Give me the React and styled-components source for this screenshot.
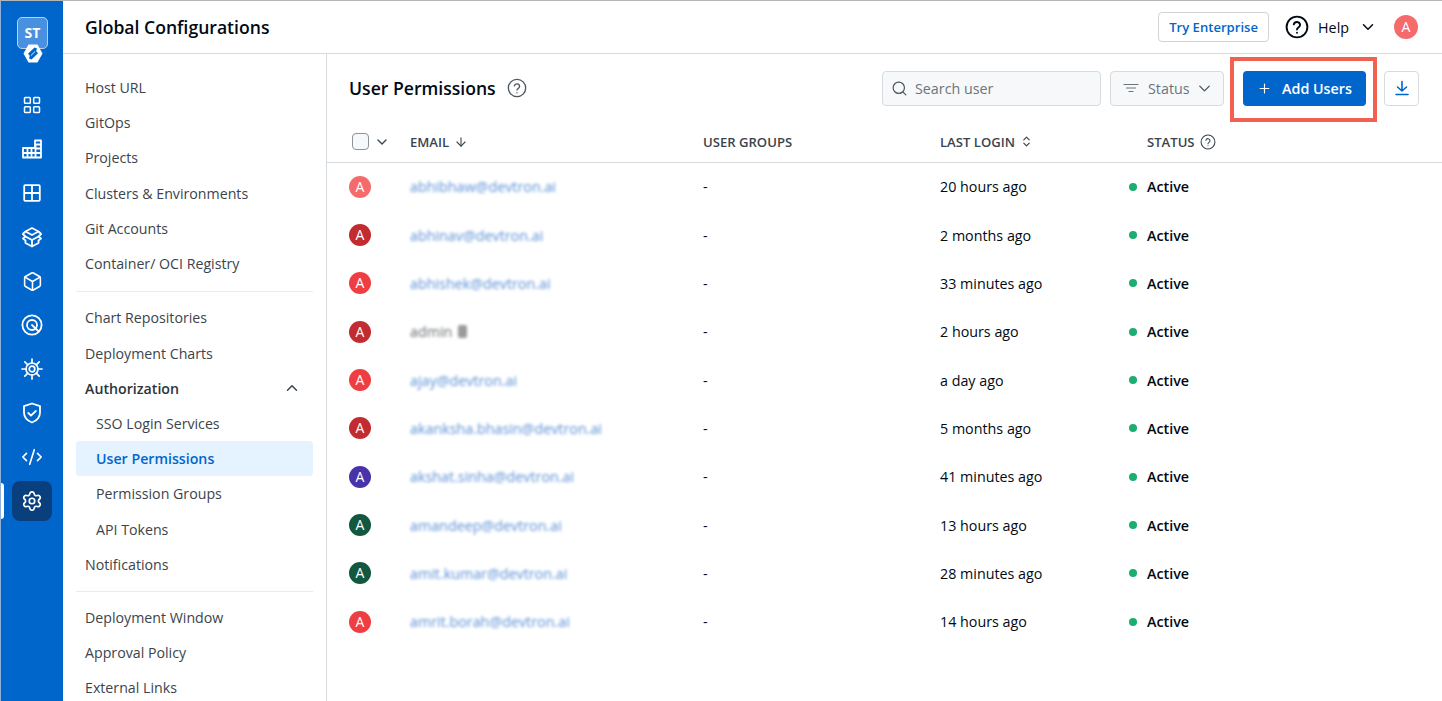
import React from 'react';
import styled, { createGlobalStyle } from 'styled-components';
import {
	LayoutGrid,
	Box,
	CodeXml,
	Settings,
	Search,
	ChevronDown,
	ChevronUp,
	ChevronsUpDown,
	ArrowDown,
	Plus,
} from 'lucide-react';

const GlobalStyle = createGlobalStyle`
	html, body { margin: 0; padding: 0; height: 100%; }
	body { font-family: "Open Sans", "Liberation Sans", sans-serif; color: #000a14; background: #fff; overflow: hidden; }
	* { box-sizing: border-box; }
`;

const BarsIcon = () => (
	<svg width="20" height="20" viewBox="0 0 20 20" fill="none" stroke="currentColor" strokeWidth="1.8" strokeLinejoin="round">
		<path d="M1 9h12V1.500h6V18.500H1z" />
		<path d="M1 14h18M5.500 9v9.500M9.500 9v9.500M13.500 6v12.500M13.500 9.500h5.500M13.500 5.500h5.500" />
	</svg>
);

const TilesIcon = () => (
	<svg width="20" height="20" viewBox="0 0 20 20" fill="none" stroke="currentColor" strokeWidth="1.8" strokeLinejoin="round">
		<rect x="2.200" y="2.200" width="15.600" height="15.600" rx="1" />
		<path d="M10 2.200v15.600M2.200 10h15.600" />
	</svg>
);

const StackIcon = () => (
	<svg width="22" height="22" viewBox="0 0 22 22" fill="none" stroke="currentColor" strokeWidth="1.8" strokeLinejoin="round">
		<path d="M11 2l6.500 3.500L11 9 4.500 5.500z" />
		<path d="M4.500 5.500L1.800 8 4.500 10.500 11 14l6.500-3.500L20.200 8l-2.700-2.500" />
		<path d="M4.500 10.500L2 12.500l2.500 2V17l6.500 3.500 6.500-3.500v-2.500l2.500-2-2.500-2M11 14v6.500" />
	</svg>
);

const TargetIcon = () => (
	<svg width="22" height="22" viewBox="0 0 22 22" fill="none" stroke="currentColor" strokeWidth="1.8" strokeLinecap="round">
		<circle cx="11" cy="11" r="9.600" />
		<circle cx="11" cy="11" r="5" />
		<path d="M11 11l6.200 6" />
	</svg>
);

const HelmIcon = () => (
	<svg width="22" height="22" viewBox="0 0 22 22" fill="none" stroke="currentColor" strokeWidth="1.700" strokeLinecap="round">
		<circle cx="11" cy="11" r="6" />
		<circle cx="11" cy="11" r="2.800" />
		<path d="M11 1v4M11 17v4M1 11h4M17 11h4M3.800 3.800l3 3M15.200 15.200l3 3M3.800 18.200l3-3M15.200 6.800l3-3" />
	</svg>
);

const GuardIcon = () => (
	<svg width="22" height="22" viewBox="0 0 22 22" fill="none" stroke="currentColor" strokeWidth="1.800" strokeLinecap="round" strokeLinejoin="round">
		<path d="M11 1.500l8 2.700v6.300c0 5-3.600 8.300-8 10-4.400-1.700-8-5-8-10V4.200z" />
		<path d="M7.300 11l2.700 2.700 4.800-4.700" />
	</svg>
);

const QuestionIcon = ({ size, weight }) => (
	<svg width={size} height={size} viewBox="0 0 24 24" fill="none" stroke="currentColor" strokeWidth={weight} strokeLinecap="round">
		<circle cx="12" cy="12" r="10.400" />
		<path d="M8.800 9.400a3.200 3.200 0 0 1 6.300.7c0 2.200-3.100 2.600-3.100 4.400" />
		<path d="M12 17.600v.1" />
	</svg>
);

const FilterIcon = () => (
	<svg width="16" height="16" viewBox="0 0 16 16" fill="none" stroke="currentColor" strokeWidth="1.200" strokeLinecap="round">
		<path d="M1 4.500h14M3.500 8h9M6 11.500h4" />
	</svg>
);

const ExportIcon = () => (
	<svg width="16" height="16" viewBox="0 0 16 16" fill="none" stroke="currentColor" strokeWidth="1.600" strokeLinecap="round" strokeLinejoin="round">
		<path d="M8 1.500v9.500M3.500 7L8 11l4.500-4M2 14.500h12" />
	</svg>
);

const LogoMark = () => (
	<svg width="20" height="19" viewBox="0 0 20 19">
		<path d="M5.500 .5h9L19.500 9.500l-5 9h-9l-5-9z" fill="#fff" />
		<path d="M11.500 3.500L5 9.800l2 2.200 4.800-4.700 1 1.200L14 4.500z" fill="#0066cc" />
		<path d="M8.500 15.500l6.500-6.300-2-2.200-4.800 4.700-1-1.200L6 14.500z" fill="#0066cc" />
	</svg>
);

const railIcons = [
	<LayoutGrid size={20} strokeWidth={1.8} />,
	<BarsIcon />,
	<TilesIcon />,
	<StackIcon />,
	<Box size={21} strokeWidth={1.8} />,
	<TargetIcon />,
	<HelmIcon />,
	<GuardIcon />,
	<CodeXml size={22} strokeWidth={1.8} />,
	<Settings size={22} strokeWidth={1.8} />,
];

const menuGroups = [
	[
		{ label: 'Host URL' },
		{ label: 'GitOps' },
		{ label: 'Projects' },
		{ label: 'Clusters & Environments' },
		{ label: 'Git Accounts' },
		{ label: 'Container/ OCI Registry' },
	],
	[
		{ label: 'Chart Repositories' },
		{ label: 'Deployment Charts' },
		{ label: 'Authorization', open: true },
		{ label: 'SSO Login Services', nested: true },
		{ label: 'User Permissions', nested: true, active: true },
		{ label: 'Permission Groups', nested: true },
		{ label: 'API Tokens', nested: true },
		{ label: 'Notifications' },
	],
	[{ label: 'Deployment Window' }, { label: 'Approval Policy' }, { label: 'External Links' }],
];

const users = [
	{ email: 'abhibhaw@devtron.ai', color: '#f56b6b', login: '20 hours ago' },
	{ email: 'abhinav@devtron.ai', color: '#c22b30', login: '2 months ago' },
	{ email: 'abhishek@devtron.ai', color: '#ef3e42', login: '33 minutes ago' },
	{ email: 'admin', color: '#c22b30', login: '2 hours ago', system: true },
	{ email: 'ajay@devtron.ai', color: '#ef3e42', login: 'a day ago' },
	{ email: 'akanksha.bhasin@devtron.ai', color: '#c22b30', login: '5 months ago' },
	{ email: 'akshat.sinha@devtron.ai', color: '#4a33a8', login: '41 minutes ago' },
	{ email: 'amandeep@devtron.ai', color: '#14573f', login: '13 hours ago' },
	{ email: 'amit.kumar@devtron.ai', color: '#14573f', login: '28 minutes ago' },
	{ email: 'amrit.borah@devtron.ai', color: '#ef3e42', login: '14 hours ago' },
];

const App = () => (
	<Page>
		<GlobalStyle />
		<Rail>
			<LogoTile>
				ST
				<LogoBadge>
					<LogoMark />
				</LogoBadge>
			</LogoTile>
			<RailNav>
				{railIcons.map((icon, i) => (
					<RailItem key={i} $active={i === railIcons.length - 1}>
						{icon}
					</RailItem>
				))}
			</RailNav>
		</Rail>

		<Main>
			<TopBar>
				<PageTitle>Global Configurations</PageTitle>
				<TopActions>
					<EnterpriseButton>Try Enterprise</EnterpriseButton>
					<HelpGroup>
						<QuestionIcon size={24} weight={1.9} />
						<HelpLabel>Help</HelpLabel>
						<ChevronDown size={18} strokeWidth={2} />
					</HelpGroup>
					<Avatar $color="#f56b6b" $size={24}>
						A
					</Avatar>
				</TopActions>
			</TopBar>

			<Body>
				<Menu>
					{menuGroups.map((group, i) => (
						<MenuGroup key={i}>
							{group.map((item) => (
								<MenuItem key={item.label} $nested={item.nested} $active={item.active} $open={item.open}>
									{item.label}
									{item.open && <ChevronUp size={18} strokeWidth={2} color="#3b444c" />}
								</MenuItem>
							))}
						</MenuGroup>
					))}
				</Menu>

				<Content>
					<Toolbar>
						<TitleGroup>
							<SectionTitle>User Permissions</SectionTitle>
							<HintIcon>
								<QuestionIcon size={20} weight={1.6} />
							</HintIcon>
						</TitleGroup>
						<SearchBox>
							<Search size={17} strokeWidth={1.7} color="#4b555e" />
							Search user
						</SearchBox>
						<StatusFilter>
							<FilterIcon />
							Status
							<StatusChevron size={19} strokeWidth={1.7} />
						</StatusFilter>
						<AddButton>
							<Plus size={15} strokeWidth={1.8} />
							Add Users
						</AddButton>
						<ExportButton>
							<ExportIcon />
						</ExportButton>
					</Toolbar>

					<HeaderRow>
						<SelectCell>
							<Checkbox />
							<ChevronDown size={16} strokeWidth={2} color="#3b444c" />
						</SelectCell>
						<HeaderCell>
							EMAIL <ArrowDown size={14} strokeWidth={1.9} />
						</HeaderCell>
						<HeaderCell>USER GROUPS</HeaderCell>
						<HeaderCell>
							LAST LOGIN <ChevronsUpDown size={13} strokeWidth={2.2} />
						</HeaderCell>
						<StatusHeader>
							STATUS <QuestionIcon size={16} weight={1.6} />
						</StatusHeader>
					</HeaderRow>

					{users.map((user) => (
						<UserRow key={user.email}>
							<Avatar $color={user.color} $size={22}>
								A
							</Avatar>
							<Email $system={user.system}>
								{user.email}
								{user.system && <SystemTag />}
							</Email>
							<span>-</span>
							<span>{user.login}</span>
							<Status>
								<Dot />
								Active
							</Status>
						</UserRow>
					))}
				</Content>
			</Body>
		</Main>
	</Page>
);

const Page = styled.div`
	display: flex;
	width: 1442px;
	height: 701px;
	overflow: hidden;
	border-top: 1px solid #b5b5b5;
	border-left: 1px solid #8fb0d8;
`;

const Rail = styled.aside`
	flex: 0 0 62px;
	display: flex;
	flex-direction: column;
	align-items: center;
	padding-top: 16px;
	background: #0066cc;
	color: #fff;
`;

const LogoTile = styled.div`
	position: relative;
	flex: none;
	width: 31px;
	height: 32px;
	margin-left: 1px;
	padding-top: 5px;
	border: 1px solid #b4d3f3;
	border-radius: 5px;
	background: #4a90e0;
	color: #fff;
	font-size: 14px;
	font-weight: 700;
	line-height: 20px;
	text-align: center;
`;

const LogoBadge = styled.span`
	position: absolute;
	left: 4.5px;
	top: 26px;
	display: flex;
`;

const RailNav = styled.nav`
	display: flex;
	flex-direction: column;
	gap: 4px;
	margin-top: 36px;
`;

const RailItem = styled.div`
	position: relative;
	display: flex;
	align-items: center;
	justify-content: center;
	width: 40px;
	height: 40px;
	border-radius: 8px;
	background: ${(p) => (p.$active ? '#0a3f7d' : 'transparent')};

	${(p) =>
		p.$active &&
		`&::before {
			content: '';
			position: absolute;
			left: -12px;
			top: 2px;
			width: 4px;
			height: 36px;
			border-radius: 0 3px 3px 0;
			background: #fff;
		}`}
`;

const Main = styled.div`
	flex: 1;
	display: flex;
	flex-direction: column;
	min-width: 0;
`;

const TopBar = styled.header`
	flex: 0 0 53px;
	display: flex;
	align-items: center;
	justify-content: space-between;
	padding: 0 24px 0 22px;
	border-bottom: 1px solid #d6dbdf;
`;

const PageTitle = styled.h1`
	margin: 0;
	font-size: 17.6px;
	font-weight: 600;
	color: #000a14;
`;

const TopActions = styled.div`
	display: flex;
	align-items: center;
`;

const EnterpriseButton = styled.button`
	width: 111px;
	height: 30px;
	padding: 0;
	border: 1px solid #d0d4d9;
	border-radius: 4px;
	background: #fff;
	color: #0066cc;
	font: 600 13.100px "Open Sans", sans-serif;
`;

const HelpGroup = styled.div`
	display: flex;
	align-items: center;
	margin: 0 17px 0 16px;
	color: #000a14;
`;

const HelpLabel = styled.span`
	margin: 0 10px 0 9px;
	font-size: 14.300px;
`;

const Avatar = styled.span`
	display: flex;
	flex: none;
	align-items: center;
	justify-content: center;
	width: ${(p) => p.$size}px;
	height: ${(p) => p.$size}px;
	border-radius: 50%;
	background: ${(p) => p.$color};
	color: #fff;
	font-size: 14px;
	line-height: 1;
`;

const Body = styled.div`
	flex: 1;
	display: flex;
	min-height: 0;
`;

const Menu = styled.nav`
	flex: 0 0 264px;
	padding: 16px 13px 0;
	border-right: 1px solid #d6dbdf;
	overflow: hidden;
`;

const MenuGroup = styled.div`
	padding-bottom: 9px;
	margin-bottom: 8px;
	border-bottom: 1px solid #e9ebed;

	&:first-child {
		padding-bottom: 9.5px;
		margin-bottom: 8.7px;
	}

	&:last-child {
		border-bottom: 0;
	}
`;

const MenuItem = styled.div`
	display: flex;
	align-items: center;
	justify-content: space-between;
	height: 35.2px;
	padding: 0 12px 0 ${(p) => (p.$nested ? 20 : 9)}px;
	border-radius: 4px;
	background: ${(p) => (p.$active ? '#e5f2ff' : 'transparent')};
	color: ${(p) => (p.$active ? '#0066cc' : p.$open ? '#2c343b' : '#3b444c')};
	font-size: 14.200px;
	font-weight: ${(p) => (p.$active || p.$open ? 600 : 400)};
`;

const Content = styled.main`
	flex: 1;
	min-width: 0;
	font-size: 14.300px;
`;

const Toolbar = styled.div`
	display: flex;
	align-items: center;
	height: 68px;
	padding: 0 23px 0 22px;
`;

const TitleGroup = styled.div`
	display: flex;
	flex: 1;
	align-items: center;
`;

const SectionTitle = styled.h2`
	margin: 0;
	font-size: 17.600px;
	font-weight: 600;
	color: #000a14;
`;

const HintIcon = styled.span`
	display: flex;
	margin-left: 11px;
	color: #4b555e;
`;

const FilterBase = styled.div`
	display: flex;
	align-items: center;
	height: 35px;
	border: 1px solid #d6dbdf;
	border-radius: 4px;
	background: #f7f8f9;
	color: #6b747c;
	font-size: 14.300px;
`;

const SearchBox = styled(FilterBase)`
	width: 219px;
	gap: 7px;
	padding-left: 8px;
`;

const StatusFilter = styled(FilterBase)`
	width: 114px;
	gap: 9px;
	margin-left: 9px;
	padding-left: 12px;
`;

const StatusChevron = styled(ChevronDown)`
	margin-left: -4px;
	color: #4b555e;
`;

const AddButton = styled.button`
	position: relative;
	display: flex;
	align-items: center;
	justify-content: center;
	gap: 10px;
	width: 123px;
	height: 35px;
	margin-left: 19px;
	padding: 0;
	border: 0;
	border-radius: 4px;
	background: #0066cc;
	color: #fff;
	font: 600 14.300px "Open Sans", sans-serif;

	&::after {
		content: '';
		position: absolute;
		inset: -14px -11px -16px -13px;
		border: 4px solid #f2614f;
		pointer-events: none;
	}
`;

const ExportButton = styled.button`
	display: flex;
	align-items: center;
	justify-content: center;
	width: 35px;
	height: 35px;
	margin-left: 18px;
	padding: 0;
	border: 1px solid #d6dbdf;
	border-radius: 4px;
	background: #fff;
	color: #0066cc;
`;

const columns = '61px 293px 237px 189px 1fr';

const HeaderRow = styled.div`
	display: grid;
	grid-template-columns: ${columns};
	align-items: center;
	height: 40.5px;
	padding-left: 22px;
	border-bottom: 1px solid #d6dbdf;
`;

const SelectCell = styled.div`
	display: flex;
	align-items: center;
	gap: 5px;
	padding-left: 3px;
`;

const Checkbox = styled.span`
	width: 17px;
	height: 17px;
	border: 1.500px solid #8c949b;
	border-radius: 4px;
	background: #f7f8f9;
`;

const HeaderCell = styled.div`
	display: flex;
	align-items: center;
	gap: 5px;
	color: #3b444c;
	font-size: 13.100px;
	font-weight: 600;
`;

const StatusHeader = styled(HeaderCell)`
	padding-left: 18px;
`;

const UserRow = styled.div`
	display: grid;
	grid-template-columns: ${columns};
	align-items: center;
	height: 48.350px;
	padding-left: 22px;
	color: #000a14;
`;

const Email = styled.span`
	display: flex;
	align-items: center;
	gap: 6px;
	color: ${(p) => (p.$system ? '#666a6e' : '#5b90d6')};
	filter: blur(1.600px);
`;

const SystemTag = styled.span`
	width: 9px;
	height: 13px;
	border-radius: 2px;
	background: #9a9a9a;
`;

const Status = styled.span`
	display: flex;
	align-items: center;
	gap: 10px;
	font-weight: 600;
`;

const Dot = styled.span`
	width: 8px;
	height: 8px;
	border-radius: 50%;
	background: #1dad70;
`;

export default App;
